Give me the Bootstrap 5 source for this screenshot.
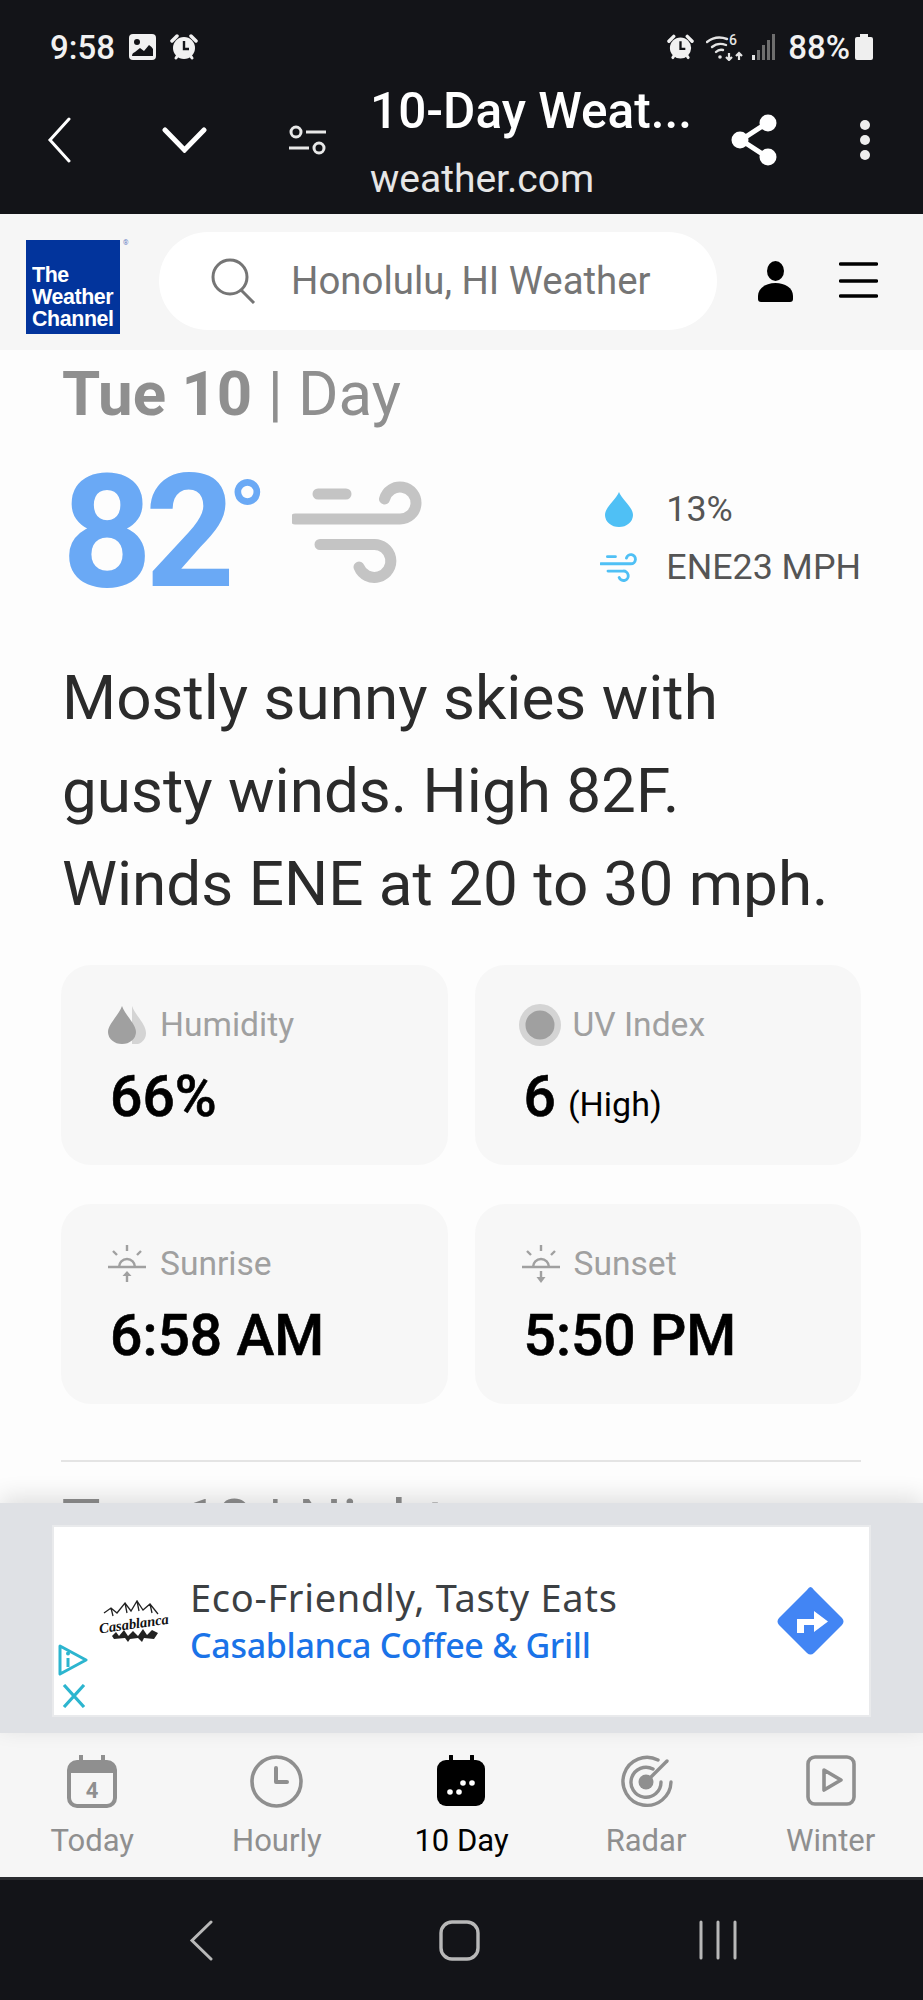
<!DOCTYPE html>
<html lang="en">
<head>
  <meta charset="UTF-8">
  <meta name="viewport" content="width=device-width, initial-scale=1">
  <title>10-Day Weather - weather.com</title>
  <link href="https://cdn.jsdelivr.net/npm/bootstrap@5.3.0/dist/css/bootstrap.min.css" rel="stylesheet">
  <style>
    html, body { width: 923px; height: 2000px; overflow: hidden; }
    body { font-family: Roboto, "Liberation Sans", sans-serif; background: #fdfdfd; color: #000; }
    svg { display: block; flex: none; }

    .top-chrome { height: 214px; background: #131418; color: #f1f1f1; }
    .status-row { height: 82px; padding: 12px 50px 0 50px; font-size: 33px; font-weight: 500; line-height: 1; }
    .status-time { margin-right: 14px; }
    .status-alarm { margin-left: 14px; }
    .status-wifi { margin-left: 12px; }
    .status-signal { margin-left: 8px; }
    .status-pct { margin-left: 13px; }
    .status-batt { margin-left: 5px; }
    .tool-row { height: 132px; padding-bottom: 16px; }
    .tool-back { margin-left: 47px; }
    .tool-down { margin-left: 91px; }
    .tool-filter { margin-left: 82px; }
    .tool-dots { margin-left: 82px; }
    .page-title { width: 340px; margin-left: 44px; margin-right: 21px; padding-top: 4px; }
    .page-title-main { font-size: 49.5px; font-weight: 500; line-height: 54px; color: #fff; white-space: nowrap; }
    .page-title-url { font-size: 39px; line-height: 42px; color: #e6e6e6; margin-top: 20px; }

    .site-bar { height: 136px; background: #f6f6f6; padding-left: 26px; }
    .twc-logo { width: 94px; height: 94px; background: #02349c; color: #fff; font-size: 22.5px; font-weight: 700; line-height: 22px; padding: 24px 0 0 6px; letter-spacing: -.4px; margin-top: 26px; font-family: "Liberation Sans", sans-serif; }
    .twc-words { display: block; transform: scaleX(.95); transform-origin: left top; white-space: nowrap; }
    .reg-mark { font-size: 7px; color: #6b82c4; margin-left: 3px; margin-top: 26px; line-height: 1; width: 10px; }
    .search-pill { width: 558px; height: 98px; margin: 18px 0 0 26px; background: #fff; border-radius: 49px; color: #757575; font-size: 38.4px; padding-left: 51px; }
    .search-pill svg { margin-right: 35px; }
    .bar-user { margin: 47px 0 0 41px; }
    .bar-menu { margin: 47px 0 0 46px; }

    .main-pane { height: 1153px; background: #fdfdfd; padding: 0 62px 0 61px; overflow: hidden; }
    .day-head { font-size: 61.8px; line-height: 70px; color: #8f8f8f; margin: 9px 0 0 1px; white-space: nowrap; }
    .day-head b { font-weight: 700; }
    .now-row { margin-top: 38px; height: 130px; }
    .temp-big { font-size: 157px; font-weight: 700; line-height: 130px; color: #6aa9f5; letter-spacing: -7px; margin-left: 1px; }
    .temp-deg { font-size: 100px; line-height: 100px; font-weight: 500; color: #6aa9f5; margin-left: 0; }
    .wind-big { margin-left: 26px; }
    .now-side { font-size: 35.8px; color: #555; line-height: 40px; margin-left: auto; padding-top: 12px; }
    .side-ico { width: 66px; }
    .side-gap { margin-top: 18px; }
    .side-drop { margin-left: 5px; }
    .forecast-text { font-size: 62px; line-height: 93px; color: #2b2b2b; margin: 54px 0 0 1px; white-space: nowrap; }

    .stat-grid { display: grid; grid-template-columns: 1fr 1fr; column-gap: 27px; row-gap: 39px; margin-top: 35px; }
    .stat-box { height: 200px; background: #f7f7f7; border-radius: 30px; padding: 40px 0 0 47px; }
    .stat-label { font-size: 33.6px; line-height: 40px; color: #a0a0a0; height: 40px; }
    .stat-label svg { margin-right: 14px; }
    .stat-label svg.uv-ico { margin-left: -3px; margin-right: 12px; }
    .stat-value { font-size: 57px; font-weight: 500; line-height: 66px; margin: 19px 0 0 2px; -webkit-text-stroke: .6px #000; }
    .stat-note { font-size: 34px; font-weight: 400; margin-left: 12px; -webkit-text-stroke: 0; }
    .rule-line { height: 2px; background: #e4e4e4; margin-top: 56px; }
    .next-head { margin-top: 25px; }

    .ad-strip { height: 230px; background: #dfe1e5; padding: 24px 54px 0 54px; position: relative; box-shadow: 0 -6px 22px rgba(0,0,0,.12); }
    .ad-box { height: 188px; background: #fff; position: relative; padding-left: 44px; outline: 2px solid #e9eaec; }
    .ad-copy { margin-left: 20px; }
    .ad-title { font-size: 38px; line-height: 46px; color: #3c4043; white-space: nowrap; font-family: "Noto Sans", Roboto, sans-serif; letter-spacing: .7px; }
    .ad-sub { font-size: 34px; font-weight: 500; line-height: 46px; color: #1a73e8; white-space: nowrap; font-family: "Noto Sans", Roboto, sans-serif; letter-spacing: -.3px; margin-top: 2px; }
    .ad-go { margin-right: 24px; }
    .ad-mark { position: absolute; left: 4px; bottom: 7px; }

    .tab-bar { height: 144px; background: #f6f6f6; }
    .tab-item { width: 20%; padding-top: 22px; color: #8f8f8f; font-size: 31px; line-height: 36px; }
    .tab-item svg { margin: 0 auto 15px; }
    .tab-item.is-on { color: #000; }
    .tab-today span { display: block; margin-top: 2px; }

    .sys-nav { height: 123px; background: #131418; border-top: 3px solid #2a2c30; padding-top: 40px; }
    .sys-back { margin-left: 189px; }
    .sys-home { margin-left: 226px; }
    .sys-recent { margin-left: 219px; }
  </style>
</head>
<body>
  <div class="top-chrome">
    <div class="status-row d-flex align-items-center">
      <span class="status-time">9:58</span>
      <svg width="27" height="26" viewBox="0 0 27 26"><rect width="27" height="26" rx="4" fill="#f1f1f1"/><circle cx="8" cy="8" r="3" fill="#131418"/><path d="M3 22 Q3 19 6 18 L11 14 L15 17 L20 11 Q23 13 24 15 V22 Z" fill="#131418"/></svg>
      <svg class="status-alarm" width="28" height="27" viewBox="0 0 28 27"><path d="M2 7 L7 2 M26 7 L21 2" stroke="#f1f1f1" stroke-width="3.5" stroke-linecap="round"/><path d="M6 24 L8 21 M22 24 L20 21" stroke="#f1f1f1" stroke-width="3" stroke-linecap="round"/><circle cx="14" cy="14" r="11" fill="#f1f1f1"/><path d="M14 7 V15 H19" fill="none" stroke="#131418" stroke-width="2.4"/></svg>
      <div class="flex-grow-1"></div>
      <svg width="27" height="27" viewBox="0 0 28 27"><path d="M2 7 L7 2 M26 7 L21 2" stroke="#f1f1f1" stroke-width="3.5" stroke-linecap="round"/><path d="M6 24 L8 21 M22 24 L20 21" stroke="#f1f1f1" stroke-width="3" stroke-linecap="round"/><circle cx="14" cy="14" r="11" fill="#f1f1f1"/><path d="M14 7 V15 H19" fill="none" stroke="#131418" stroke-width="2.4"/></svg>
      <svg class="status-wifi" width="38" height="28" viewBox="0 0 38 28"><g fill="none" stroke="#e4e4e4" stroke-width="2.4" stroke-linecap="round"><path d="M1 9 Q10 2 21 6"/><path d="M6 14 Q12 9 20 12"/><path d="M10 19 Q13 16 17 17"/></g><circle cx="14" cy="24" r="1.8" fill="#e4e4e4"/><path d="M23 20 V27 M20 24 L23 27 L26 24 M33 27 V20 M30 23 L33 20 L36 23" fill="none" stroke="#e4e4e4" stroke-width="2.2"/><text x="23" y="12" font-size="14" font-weight="500" fill="#e4e4e4" font-family="Roboto, sans-serif">6</text></svg>
      <svg class="status-signal" width="23" height="26" viewBox="0 0 23 26"><g fill="#6e6e6e"><rect x="0" y="21" width="3" height="5" fill="#e4e4e4"/><rect x="5" y="16" width="3" height="10"/><rect x="10" y="11" width="3" height="15"/><rect x="15" y="6" width="3" height="20"/><rect x="20" y="0" width="3" height="26"/></g></svg>
      <span class="status-pct">88%</span>
      <svg class="status-batt" width="18" height="26" viewBox="0 0 18 26"><path d="M5 0 H13 V3 H16 Q18 3 18 5 V24 Q18 26 16 26 H2 Q0 26 0 24 V5 Q0 3 2 3 H5 Z" fill="#efefef"/></svg>
    </div>
    <div class="tool-row d-flex align-items-center">
      <svg class="tool-back" width="24" height="46" viewBox="0 0 24 46"><path d="M22 2 L3 23 L22 44" fill="none" stroke="#fff" stroke-width="3" stroke-linecap="round"/></svg>
      <svg class="tool-down" width="45" height="26" viewBox="0 0 45 26"><path d="M3 3 L22.5 23 L42 3" fill="none" stroke="#fff" stroke-width="5" stroke-linecap="round"/></svg>
      <svg class="tool-filter" width="37" height="30" viewBox="0 0 37 30"><g fill="none" stroke="#e8e8e8" stroke-width="3"><circle cx="7" cy="7" r="5"/><circle cx="30" cy="23" r="5"/><path d="M17 7 H37 M0 23 H20"/></g></svg>
      <div class="page-title">
        <div class="page-title-main">10-Day Weat...</div>
        <div class="page-title-url">weather.com</div>
      </div>
      <svg width="46" height="52" viewBox="0 0 46 52"><path d="M36 9 L10 26 L36 43" fill="none" stroke="#fff" stroke-width="5"/><circle cx="37" cy="9" r="8.5" fill="#fff"/><circle cx="9" cy="26" r="8.5" fill="#fff"/><circle cx="37" cy="43" r="8.5" fill="#fff"/></svg>
      <svg class="tool-dots" width="12" height="42" viewBox="0 0 12 42"><circle cx="6" cy="6" r="5" fill="#ededed"/><circle cx="6" cy="21" r="5" fill="#ededed"/><circle cx="6" cy="36" r="5" fill="#ededed"/></svg>
    </div>
  </div>

  <div class="site-bar d-flex">
    <div class="twc-logo"><span class="twc-words">The<br>Weather<br>Channel</span></div>
    <div class="reg-mark">®</div>
    <div class="search-pill d-flex align-items-center">
      <svg width="46" height="46" viewBox="0 0 46 46"><circle cx="20" cy="19" r="17" fill="none" stroke="#757575" stroke-width="3"/><path d="M31 32 L44 45" stroke="#757575" stroke-width="3"/></svg>
      <span>Honolulu, HI Weather</span>
    </div>
    <svg class="bar-user" width="35" height="41" viewBox="0 0 35 41"><ellipse cx="17.5" cy="10" rx="8.5" ry="10"/><path d="M0 38 V35 C0 27 8 22 17.5 22 S35 27 35 35 V38 Q35 41 32 41 H3 Q0 41 0 38 Z"/></svg>
    <svg class="bar-menu" width="39" height="38" viewBox="0 0 39 38"><path d="M1.5 3 H37.5 M1.5 20 H37.5 M1.5 35 H37.5" stroke="#000" stroke-width="3.5" stroke-linecap="round"/></svg>
  </div>

  <div class="main-pane">
    <div class="day-head"><b>Tue 10</b> | Day</div>
    <div class="now-row d-flex align-items-center">
      <div class="d-flex align-items-start">
        <span class="temp-big">82</span><span class="temp-deg">°</span>
      </div>
      <svg class="wind-big" width="133" height="106" viewBox="12 10 133 106"><g fill="none" stroke="#c4c4c4" stroke-width="11" stroke-linecap="round"><path d="M38 25 H66"/><path d="M15 50 H120 A16 16 0 1 0 104.5 30"/><path d="M40 75.5 H93 A16.5 16.5 0 1 1 79 98"/></g></svg>
      <div class="now-side">
        <div class="d-flex align-items-center">
          <div class="side-ico"><svg class="side-drop" width="28" height="35" viewBox="0 0 28 35"><path d="M14 0 C17 8 28 15 28 23 A14 12 0 0 1 0 23 C0 15 11 8 14 0 Z" fill="#4fc0f5"/></svg></div>
          <span>13%</span>
        </div>
        <div class="d-flex align-items-center side-gap">
          <div class="side-ico"><svg width="38" height="31" viewBox="12 10 133 106"><g fill="none" stroke="#4fc0f5" stroke-width="10" stroke-linecap="round"><path d="M38 25 H66"/><path d="M15 50 H120 A16 16 0 1 0 104.5 30"/><path d="M40 75.5 H93 A16.5 16.5 0 1 1 79 98"/></g></svg></div>
          <span>ENE23 MPH</span>
        </div>
      </div>
    </div>
    <div class="forecast-text">Mostly sunny skies with<br>gusty winds. High 82F.<br>Winds ENE at 20 to 30 mph.</div>

    <div class="stat-grid">
      <div class="stat-box">
        <div class="stat-label d-flex align-items-center">
          <svg width="38" height="38" viewBox="0 0 38 38"><path d="M24 0 C27 9 38 18 38 27 A11 11 0 0 1 24 38 Z" fill="#d4d4d4"/><path d="M14 0 C17 9 28 18 28 26 A14 12 0 0 1 0 26 C0 18 11 9 14 0 Z" fill="#a0a0a0"/></svg>
          Humidity
        </div>
        <div class="stat-value">66%</div>
      </div>
      <div class="stat-box">
        <div class="stat-label d-flex align-items-center">
          <svg class="uv-ico" width="42" height="42" viewBox="0 0 42 42"><circle cx="21" cy="21" r="21" fill="#d4d4d4"/><circle cx="21" cy="21" r="14.5" fill="#a0a0a0"/></svg>
          UV Index
        </div>
        <div class="stat-value">6<span class="stat-note">(High)</span></div>
      </div>
      <div class="stat-box">
        <div class="stat-label d-flex align-items-center">
          <svg width="38" height="38" viewBox="0 0 38 38"><g fill="none" stroke="#a0a0a0" stroke-width="2.4"><path d="M0 22 H38"/><path d="M11 22 A8 8 0 0 1 27 22"/><path d="M19 0 V6 M5 6 L9 10 M33 6 L29 10"/><path d="M19 37 V28"/></g><path d="M14.5 31 L19 26 L23.5 31 Z" fill="#a0a0a0"/></svg>
          Sunrise
        </div>
        <div class="stat-value">6:58 AM</div>
      </div>
      <div class="stat-box">
        <div class="stat-label d-flex align-items-center">
          <svg width="38" height="38" viewBox="0 0 38 38"><g fill="none" stroke="#a0a0a0" stroke-width="2.4"><path d="M0 22 H38"/><path d="M11 22 A8 8 0 0 1 27 22"/><path d="M19 0 V6 M5 6 L9 10 M33 6 L29 10"/><path d="M19 26 V34"/></g><path d="M14.5 32 L19 38 L23.5 32 Z" fill="#a0a0a0"/></svg>
          Sunset
        </div>
        <div class="stat-value">5:50 PM</div>
      </div>
    </div>
    <div class="rule-line"></div>
    <div class="day-head next-head"><b>Tue 10</b> | Night</div>
  </div>

  <div class="ad-strip">
    <div class="ad-box d-flex align-items-center">
      <svg width="72" height="44" viewBox="0 0 72 44">
        <path d="M6 14 L13 9 L19 14 L27 4 L33 12 L39 2 L45 11 L52 5 L60 15 M13 9 L15 17 M27 4 L29 14 M39 2 L41 12 M52 5 L54 14" fill="none" stroke="#222" stroke-width="1.3"/>
        <text x="1" y="30" transform="rotate(-8 33 26)" font-family="'Liberation Serif', serif" font-style="italic" font-weight="700" font-size="14.5" fill="#111">Casablanca</text>
        <path d="M14 37 L18 33 L21 37 L26 31 L30 37 L35 32 L40 37 L45 30 L49 36 L54 31 L60 34 L56 40 L46 39 L44 43 L40 39 L32 40 L30 43 L27 39 L16 40 Z" fill="#222"/>
      </svg>
      <div class="ad-copy">
        <div class="ad-title">Eco-Friendly, Tasty Eats</div>
        <div class="ad-sub">Casablanca Coffee &amp; Grill</div>
      </div>
      <svg class="ms-auto ad-go" width="69" height="69" viewBox="0 0 69 69"><path d="M34.5 0 Q36 0 38 3 L66 31 Q69 34.5 66 38 L38 66 Q34.5 69 31 66 L3 38 Q0 34.5 3 31 L31 3 Q33 0 34.5 0 Z" fill="#4285f4"/><path d="M21 46 V32 H38 V24 L52 34.5 L38 45 V38 H28 V46 Z" fill="#fff"/></svg>
      <div class="ad-mark d-flex flex-column gap-2">
        <svg width="30" height="32" viewBox="0 0 30 32"><path d="M2 2 L28 16 L2 30 Z" fill="none" stroke="#2cb5cf" stroke-width="3" stroke-linejoin="round"/><path d="M10 14 V23" stroke="#2cb5cf" stroke-width="3"/><circle cx="10" cy="9.5" r="2" fill="#2cb5cf"/></svg>
        <svg class="ms-1" width="24" height="24" viewBox="0 0 24 24"><path d="M2 1 L22 23 M22 1 L2 23" stroke="#2cb5cf" stroke-width="3.2"/></svg>
      </div>
    </div>
  </div>

  <div class="tab-bar d-flex text-center">
    <div class="tab-item tab-today">
      <svg width="50" height="53" viewBox="0 0 50 53"><path d="M14 0 V8 M36 0 V8" stroke="#8f8f8f" stroke-width="4" stroke-linecap="round"/><rect x="2" y="7" width="46" height="44" rx="8" fill="none" stroke="#8f8f8f" stroke-width="4"/><path d="M2 18 V13 Q2 7 9 7 H41 Q48 7 48 13 V18 Z" fill="#8f8f8f"/><text x="25" y="43" text-anchor="middle" font-family="Roboto, sans-serif" font-size="22" font-weight="700" fill="#8f8f8f">4</text></svg>
      <span>Today</span>
    </div>
    <div class="tab-item">
      <svg width="53" height="53" viewBox="0 0 53 53"><circle cx="26.5" cy="26.5" r="24.5" fill="none" stroke="#8f8f8f" stroke-width="3.6"/><path d="M26 13 V27 H37" fill="none" stroke="#8f8f8f" stroke-width="4" stroke-linecap="round" stroke-linejoin="round"/></svg>
      <span>Hourly</span>
    </div>
    <div class="tab-item is-on">
      <svg width="48" height="53" viewBox="0 0 48 53"><path d="M14 1 V8 M35 1 V8" stroke="#000" stroke-width="4" stroke-linecap="round"/><rect y="5" width="48" height="46" rx="9"/><g fill="#fff"><circle cx="13" cy="37" r="2.8"/><circle cx="22" cy="37" r="2.8"/><circle cx="26" cy="28" r="2.8"/><circle cx="35" cy="28" r="2.8"/></g></svg>
      <span>10 Day</span>
    </div>
    <div class="tab-item">
      <svg width="53" height="53" viewBox="0 0 53 53"><g fill="none" stroke="#8f8f8f" stroke-width="3.4" stroke-linecap="round"><path d="M38 5 A24 24 0 1 0 51 27"/><path d="M33 14 A15 15 0 1 0 41 27"/><path d="M26 27 L47 6"/></g><circle cx="26" cy="27" r="7.5" fill="#8f8f8f"/></svg>
      <span>Radar</span>
    </div>
    <div class="tab-item">
      <svg width="50" height="53" viewBox="0 0 50 53"><rect x="2" y="2" width="46" height="47" rx="7" fill="none" stroke="#8f8f8f" stroke-width="3.6"/><path d="M18 15 L35 25 L18 35 Z" fill="none" stroke="#8f8f8f" stroke-width="3.6" stroke-linejoin="round"/></svg>
      <span>Winter</span>
    </div>
  </div>

  <div class="sys-nav d-flex">
    <svg class="sys-back" width="24" height="41" viewBox="0 0 24 41"><path d="M22 2 L3 20.5 L22 39" fill="none" stroke="#b8b8b8" stroke-width="3" stroke-linecap="round"/></svg>
    <svg class="sys-home" width="41" height="41" viewBox="0 0 41 41"><rect x="2" y="2" width="37" height="37" rx="11" fill="none" stroke="#b8b8b8" stroke-width="3.4"/></svg>
    <svg class="sys-recent" width="38" height="40" viewBox="0 0 38 40"><path d="M2 2 V38 M19 2 V38 M36 2 V38" stroke="#b8b8b8" stroke-width="3" stroke-linecap="round"/></svg>
  </div>
  <script src="https://cdn.jsdelivr.net/npm/bootstrap@5.3.0/dist/js/bootstrap.bundle.min.js"></script>
</body>
</html>
